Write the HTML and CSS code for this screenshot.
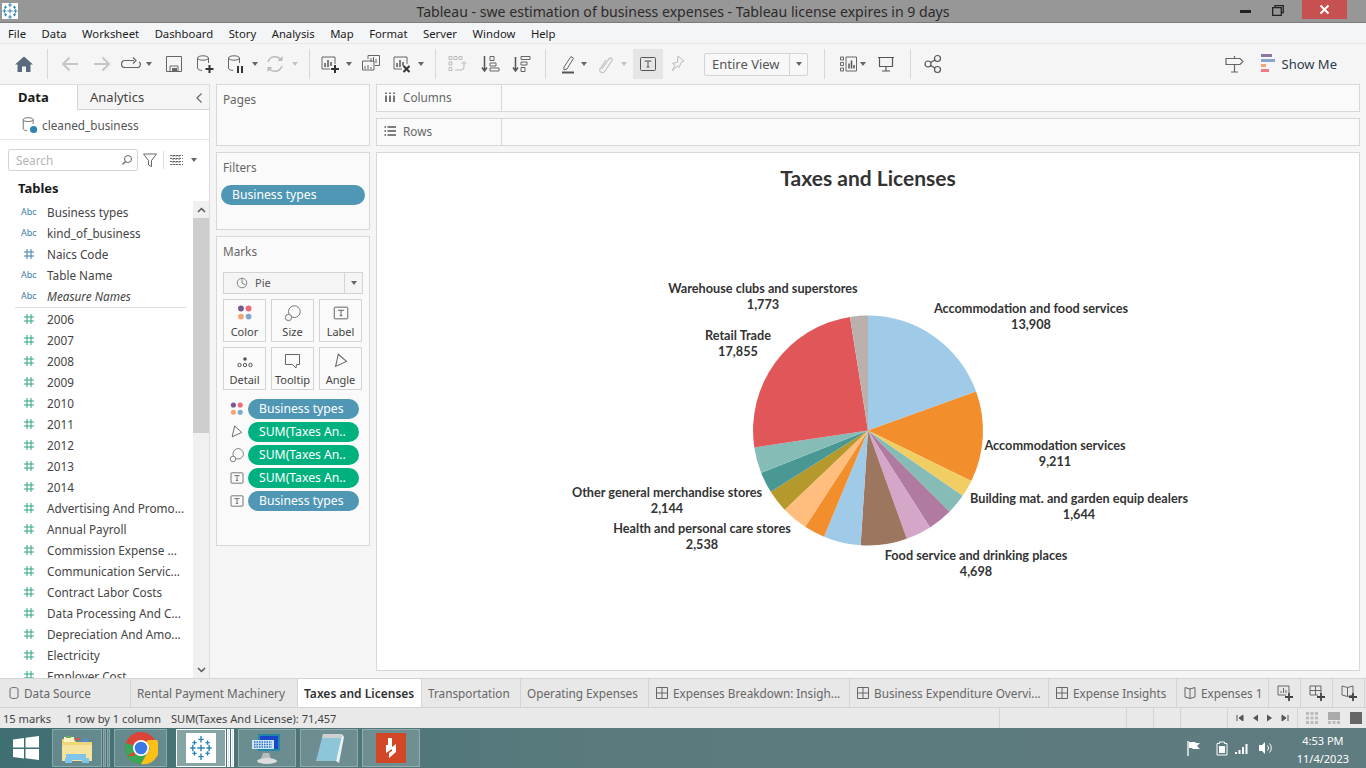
FILE: index.html
```html
<!DOCTYPE html>
<html lang="en">
<head>
  <meta charset="UTF-8" />
  <title>Tableau - swe estimation of business expenses</title>
  <link rel="stylesheet" href="styles.css">
</head>
<body>
  <svg class="defs" width="0" height="0">
    <symbol id="logo" viewBox="0 0 24 24">
      <path d="M12 1v6M9.500 4h5M12 17v6M9.500 20h5M4.500 9v6M2 12h5M19.500 9v6M17 12h5M12 9v6M8.500 12h7M6 5v4M4 7h4M18 5v4M16 7h4M6 15v4M4 17h4M18 15v4M16 17h4" fill="none" stroke="#2f84b5" stroke-width="1.300"/>
    </symbol>
    <symbol id="cyl" viewBox="0 0 20 20">
      <ellipse cx="8" cy="4" rx="5.500" ry="2.200" fill="none" stroke="#666"/>
      <path d="M2.500 4v10c0 1.500 2 2.300 4.500 2.400M13.500 4v5" fill="none" stroke="#666"/>
    </symbol>
    <symbol id="bars" viewBox="0 0 20 20">
      <path d="M10 15H2V3h13v7" fill="none" stroke="#666"/>
      <path d="M5 9v4M8 6v7M11 8v4" stroke="#555" stroke-width="1.500"/>
    </symbol>
    <symbol id="tbox" viewBox="0 0 20 20">
      <rect x="2.500" y="3.500" width="15" height="13" rx="1" fill="none" stroke="#555"/>
      <path d="M7 7.500V7h6v.5M10 7v6M8.500 13h3" fill="none" stroke="#555"/>
    </symbol>
    <symbol id="dots" viewBox="0 0 20 20">
      <circle cx="5.500" cy="5" r="3.200" fill="#76598a"/>
      <circle cx="14" cy="5" r="3.200" fill="#ef6a78"/>
      <circle cx="5.500" cy="14" r="3.200" fill="#f2a676"/>
      <circle cx="14" cy="14" r="3.200" fill="#85a7cf"/>
    </symbol>
    <symbol id="sizeic" viewBox="0 0 20 20">
      <circle cx="11.500" cy="8.500" r="6.500" fill="#fafafa" stroke="#666"/>
      <circle cx="5" cy="15" r="3.500" fill="#fafafa" stroke="#666"/>
    </symbol>
    <symbol id="angle" viewBox="0 0 20 20">
      <path d="M7 2.500l9 8-12 5.500z" fill="none" stroke="#666" stroke-width="1.200"/>
    </symbol>
    <symbol id="hash" viewBox="0 0 12 12">
      <path d="M4 1v10M8 1v10M1 4h10M1 8h10" fill="none" stroke="currentColor"/>
    </symbol>
    <symbol id="grid4" viewBox="0 0 14 14">
      <path d="M1.500 1.500h11v11h-11zM7 1.500v11M1.500 7h11" fill="none" stroke="#666"/>
    </symbol>
    <symbol id="book" viewBox="0 0 14 14">
      <path d="M7 3L2 1.500v9.500l5 1.500 5-1.500V1.500zM7 3v9.500" fill="none" stroke="#666"/>
    </symbol>
  </svg>

  <div class="titlebar">
    <div class="app-icon"><svg width="18" height="18"><use href="#logo"/></svg></div>
    <div class="title-text">Tableau - swe estimation of business expenses - Tableau license expires in 9 days</div>
    <div class="win-btns">
      <span class="win-min"></span>
      <svg class="win-max" width="12" height="11" viewBox="0 0 12 11"><path d="M3 2V.7h8.300v7H9.500M.7 2.700h8.600v7.600H.7z" fill="none" stroke="#222" stroke-width="1.300"/></svg>
      <div class="win-close"><svg width="11" height="11" viewBox="0 0 11 11"><path d="M1.500 1.500l8 8M9.500 1.500l-8 8" stroke="#fff" stroke-width="2"/></svg></div>
    </div>
  </div>

  <div class="menubar">
    <a>File</a><a>Data</a><a>Worksheet</a><a>Dashboard</a><a>Story</a><a>Analysis</a><a>Map</a><a>Format</a><a>Server</a><a>Window</a><a>Help</a>
  </div>

  <div class="toolbar">
    <svg class="tool" viewBox="0 0 20 20"><path d="M10 2.500l9 8h-2.500V18h-4.500v-5.500H8V18H3.500v-7.500H1z" fill="#5a6b7d"/></svg>
    <span class="sep m13"></span>
    <svg class="tool m12" viewBox="0 0 20 20"><path d="M18 10H3M9.500 3.500L3 10l6.500 6.500" fill="none" stroke="#c6c6c6" stroke-width="2"/></svg>
    <svg class="tool m12" viewBox="0 0 20 20"><path d="M2 10h15M10.500 3.500L17 10l-6.500 6.500" fill="none" stroke="#c6c6c6" stroke-width="2"/></svg>
    <svg class="tool m9" viewBox="0 0 20 20"><path d="M13 6.500H4a3.500 3.500 0 0 0 0 7h12a3 3 0 0 0 2-5.500M12 3.500l3 3-3 3" fill="none" stroke="#666" stroke-width="1.200"/></svg>
    <span class="drop m5"></span>
    <svg class="tool m10" viewBox="0 0 20 20"><path d="M2.500 2.500h15v15h-15z" fill="none" stroke="#666"/><path d="M6 12h8v5.500H6z" fill="none" stroke="#666"/><path d="M8 14h5v3H8z" fill="#666"/></svg>
    <svg class="tool m11" viewBox="0 0 20 20"><use href="#cyl"/><path d="M14.500 11v8M10.500 15h8" stroke="#333" stroke-width="2"/></svg>
    <svg class="tool m11" viewBox="0 0 20 20"><use href="#cyl"/><path d="M12 12v7M16 12v7" stroke="#333" stroke-width="2"/></svg>
    <span class="drop m6"></span>
    <svg class="tool m5" viewBox="0 0 20 20"><path d="M3 8a7.500 7.500 0 0 1 13-2.500M17 12a7.500 7.500 0 0 1-13 2.500" fill="none" stroke="#bbb" stroke-width="1.500"/><path d="M17.500 2v5h-5zM2.500 18v-5h5z" fill="#bbb"/></svg>
    <span class="drop faint m7"></span>
    <span class="sep m9"></span>
    <svg class="tool m10" viewBox="0 0 20 20"><use href="#bars"/><path d="M15 11v8M11 15h8" stroke="#333" stroke-width="2"/></svg>
    <span class="drop m6"></span>
    <svg class="tool m7" viewBox="0 0 20 20"><path d="M7 5V1.500h11.500v10H14" fill="none" stroke="#666"/><path d="M1.500 7h11.500v9H1.500z" fill="#f5f5f5" stroke="#666"/><path d="M10 8V4M12.500 8V3M15 9V5M4 15v-3M7 15v-4M10 15v-2" stroke="#666"/></svg>
    <svg class="tool m11" viewBox="0 0 20 20"><use href="#bars"/><path d="M11.500 12l6 6M17.500 12l-6 6" stroke="#333" stroke-width="2"/></svg>
    <span class="drop m6"></span>
    <span class="sep m9"></span>
    <svg class="tool m11" viewBox="0 0 20 20"><path d="M2 2.500h3v3H2zM7 2.500h3v3H7zM12 2.500h3v3h-3zM2 8h3v3H2zM2 13.500h3v3H2zM8 16h6a3 3 0 0 0 3-3V8M14.500 10l2.500-2.500 2.500 2.500" fill="none" stroke="#bbb"/></svg>
    <svg class="tool m13" viewBox="0 0 20 20"><path d="M4.500 2v14M2 13.500L4.500 17 7 13.500" fill="none" stroke="#555" stroke-width="1.500"/><path d="M10 2.500h4v4h-4zM10 9h6v3h-6zM10 14h9v3h-9z" fill="none" stroke="#666"/></svg>
    <svg class="tool m11" viewBox="0 0 20 20"><path d="M4.500 3v14M2 13.500L4.500 17 7 13.500" fill="none" stroke="#555" stroke-width="1.500"/><path d="M10 2.500h9v3h-9zM10 8h6v3h-6zM10 13.500h4v4h-4z" fill="none" stroke="#666"/></svg>
    <span class="sep m14"></span>
    <svg class="tool m12" viewBox="0 0 20 20"><path d="M6 13L13 2.500l2.500 1.700L9 15l-3 1z" fill="none" stroke="#666"/><path d="M4 18.500h12" stroke="#555" stroke-width="2"/></svg>
    <span class="drop m3"></span>
    <svg class="tool m6" viewBox="0 0 20 20"><path d="M7 15l7-10c1.500-2 4-.5 3 1.500L10 17c-2 3-6.500 1-5-2l6-9" fill="none" stroke="#c4c4c4" stroke-width="1.300"/></svg>
    <span class="drop faint m6"></span>
    <div class="tool-on m4"><svg width="20" height="20"><use href="#tbox"/></svg></div>
    <svg class="tool m4" viewBox="0 0 20 20"><path d="M11 2l6 5-2.500 1-2.500 5.500-1.500-1.500L5 17l3-5.500-2.500-2 5-1.500z" fill="none" stroke="#bbb"/></svg>
    <div class="fit-box m17"><span class="fit-label">Entire View</span><span class="fit-arrow"><span class="drop"></span></span></div>
    <span class="sep m16"></span>
    <svg class="tool m13" viewBox="0 0 20 20"><path d="M2.500 3h3v3h-3zM2.500 8.500h3v3h-3zM2.500 14h3v3h-3zM8 3h10.500v14H8z" fill="none" stroke="#666"/><path d="M11 9.500v5M13.500 6.500v8M16 11v3.500" stroke="#555" stroke-width="1.500"/></svg>
    <span class="drop m2"></span>
    <svg class="tool m8" viewBox="0 0 20 20"><path d="M2 3.500h16M3.500 3.500h13v9h-13zM10 12.500v4M6 17h8" fill="none" stroke="#555" stroke-width="1.200"/></svg>
    <span class="sep m14"></span>
    <svg class="tool m12" viewBox="0 0 20 20"><circle cx="5" cy="10" r="3" fill="none" stroke="#555" stroke-width="1.200"/><circle cx="14.500" cy="4.500" r="3" fill="none" stroke="#555" stroke-width="1.200"/><circle cx="14.500" cy="15.500" r="3" fill="none" stroke="#555" stroke-width="1.200"/><path d="M7.600 8.500l4.300-2.500M7.600 11.500l4.300 2.500" stroke="#555" stroke-width="1.200"/></svg>
    <svg class="tool push-right" viewBox="0 0 20 20"><path d="M2 4.500h14l3 3-3 3H2zM10.500 10.500V18M7 18h7M10.500 2v2.500" fill="none" stroke="#666" stroke-width="1.200"/></svg>
    <div class="showme m17">
      <span class="showme-icon"><i class="sm1"></i><i class="sm2"></i><i class="sm3"></i><i class="sm4"></i></span>
      <span>Show Me</span>
    </div>
  </div>

  <div class="workspace">
    <div class="sidebar">
      <div class="side-tabs">
        <div class="side-tab active">Data</div>
        <div class="side-tab">Analytics
          <svg class="collapse" width="8" height="12" viewBox="0 0 8 12"><path d="M6.500 1.500L2 6l4.500 4.500" fill="none" stroke="#666" stroke-width="1.200"/></svg>
        </div>
      </div>
      <div class="source">
        <svg width="18" height="18" viewBox="0 0 20 20"><use href="#cyl"/><circle cx="14" cy="15" r="4" fill="#2f84b5"/></svg>
        <span>cleaned_business</span>
      </div>
      <div class="search-row">
        <div class="search-box">
          <span>Search</span>
          <svg width="12" height="12" viewBox="0 0 12 12"><circle cx="7" cy="5" r="3.500" fill="none" stroke="#666"/><path d="M4.500 7.500L1.500 10.500" stroke="#666" stroke-width="1.200"/></svg>
        </div>
        <svg width="16" height="16" viewBox="0 0 16 16"><path d="M1.500 2h13L9.500 8.500v6l-3-1.500V8.500z" fill="none" stroke="#666"/></svg>
        <span class="vline"></span>
        <svg width="13" height="10" viewBox="0 0 13 10"><path d="M0 .5h13M0 3.500h13M0 6.500h13M0 9.500h13M3 0v10M6 0v10M9 0v10" fill="none" stroke="#666" stroke-dasharray="2 1"/></svg>
        <span class="drop"></span>
      </div>
      <div class="tables-head">Tables</div>
      <div class="fields-wrap">
        <div class="fields">
          <div class="field"><span class="t-abc">Abc</span>Business types</div>
          <div class="field"><span class="t-abc">Abc</span>kind_of_business</div>
          <div class="field"><svg class="t-hash dim" width="12" height="12"><use href="#hash"/></svg>Naics Code</div>
          <div class="field"><span class="t-abc">Abc</span>Table Name</div>
          <div class="field em"><span class="t-abc">Abc</span>Measure Names</div>
          <div class="field-line"></div>
          <div class="field"><svg class="t-hash" width="12" height="12"><use href="#hash"/></svg>2006</div>
          <div class="field"><svg class="t-hash" width="12" height="12"><use href="#hash"/></svg>2007</div>
          <div class="field"><svg class="t-hash" width="12" height="12"><use href="#hash"/></svg>2008</div>
          <div class="field"><svg class="t-hash" width="12" height="12"><use href="#hash"/></svg>2009</div>
          <div class="field"><svg class="t-hash" width="12" height="12"><use href="#hash"/></svg>2010</div>
          <div class="field"><svg class="t-hash" width="12" height="12"><use href="#hash"/></svg>2011</div>
          <div class="field"><svg class="t-hash" width="12" height="12"><use href="#hash"/></svg>2012</div>
          <div class="field"><svg class="t-hash" width="12" height="12"><use href="#hash"/></svg>2013</div>
          <div class="field"><svg class="t-hash" width="12" height="12"><use href="#hash"/></svg>2014</div>
          <div class="field"><svg class="t-hash" width="12" height="12"><use href="#hash"/></svg>Advertising And Promo...</div>
          <div class="field"><svg class="t-hash" width="12" height="12"><use href="#hash"/></svg>Annual Payroll</div>
          <div class="field"><svg class="t-hash" width="12" height="12"><use href="#hash"/></svg>Commission Expense ...</div>
          <div class="field"><svg class="t-hash" width="12" height="12"><use href="#hash"/></svg>Communication Servic...</div>
          <div class="field"><svg class="t-hash" width="12" height="12"><use href="#hash"/></svg>Contract Labor Costs</div>
          <div class="field"><svg class="t-hash" width="12" height="12"><use href="#hash"/></svg>Data Processing And C...</div>
          <div class="field"><svg class="t-hash" width="12" height="12"><use href="#hash"/></svg>Depreciation And Amo...</div>
          <div class="field"><svg class="t-hash" width="12" height="12"><use href="#hash"/></svg>Electricity</div>
          <div class="field"><svg class="t-hash" width="12" height="12"><use href="#hash"/></svg>Employer Cost</div>
        </div>
        <div class="scrollbar">
          <div class="sb-btn"><svg width="9" height="6" viewBox="0 0 9 6"><path d="M1 5l3.500-3.500L8 5" fill="none" stroke="#555" stroke-width="1.500"/></svg></div>
          <div class="sb-thumb"></div>
          <div class="sb-track"></div>
          <div class="sb-btn"><svg width="9" height="6" viewBox="0 0 9 6"><path d="M1 1l3.500 3.500L8 1" fill="none" stroke="#555" stroke-width="1.500"/></svg></div>
        </div>
      </div>
    </div>

    <div class="cards">
      <div class="card pages"><div class="card-head">Pages</div></div>
      <div class="card filters">
        <div class="card-head">Filters</div>
        <div class="pill blue filter-pill">Business types</div>
      </div>
      <div class="card marks">
        <div class="card-head">Marks</div>
        <div class="mark-type">
          <span class="mark-type-label">
            <svg width="12" height="12" viewBox="0 0 12 12"><circle cx="6" cy="6" r="4.800" fill="none" stroke="#888"/><path d="M6 6V1.200M6 6l3.500 2" stroke="#888"/></svg>
            Pie
          </span>
          <span class="mark-arrow"><span class="drop"></span></span>
        </div>
        <div class="mark-grid">
          <div class="mark-btn"><svg width="18" height="18"><use href="#dots"/></svg>Color</div>
          <div class="mark-btn"><svg width="18" height="18"><use href="#sizeic"/></svg>Size</div>
          <div class="mark-btn"><svg width="18" height="18"><use href="#tbox"/></svg>Label</div>
          <div class="mark-btn"><svg width="18" height="18" viewBox="0 0 18 18"><circle cx="9" cy="7" r="1.800" fill="#555"/><circle cx="3.500" cy="13" r="1.700" fill="none" stroke="#555"/><circle cx="9" cy="13" r="1.700" fill="none" stroke="#555"/><circle cx="14.500" cy="13" r="1.700" fill="none" stroke="#555"/></svg>Detail</div>
          <div class="mark-btn"><svg width="18" height="18" viewBox="0 0 18 18"><path d="M1.500 2.500h14v10h-3l-.5 3.500-3.500-3.500h-7z" fill="none" stroke="#666"/></svg>Tooltip</div>
          <div class="mark-btn"><svg width="18" height="18"><use href="#angle"/></svg>Angle</div>
        </div>
        <div class="enc-list">
          <div class="enc"><svg width="16" height="16"><use href="#dots"/></svg><div class="pill blue">Business types</div></div>
          <div class="enc"><svg width="16" height="16"><use href="#angle"/></svg><div class="pill green">SUM(Taxes An..</div></div>
          <div class="enc"><svg width="16" height="16"><use href="#sizeic"/></svg><div class="pill green">SUM(Taxes An..</div></div>
          <div class="enc"><svg width="16" height="16"><use href="#tbox"/></svg><div class="pill green">SUM(Taxes An..</div></div>
          <div class="enc"><svg width="16" height="16"><use href="#tbox"/></svg><div class="pill blue">Business types</div></div>
        </div>
      </div>
    </div>

    <div class="canvas-col">
      <div class="shelf">
        <div class="shelf-name">
          <svg width="12" height="12" viewBox="0 0 12 12"><path d="M2 1.500v1.500M6 1.500v1.500M10 1.500v1.500M2 4.500V11M6 4.500V11M10 4.500V11" stroke="#555" stroke-width="1.600"/></svg>
          Columns
        </div>
      </div>
      <div class="shelf">
        <div class="shelf-name">
          <svg width="12" height="12" viewBox="0 0 12 12"><path d="M.5 2h1.500M.5 6h1.500M.5 10h1.500M3.500 2H12M3.500 6H12M3.500 10H12" stroke="#555" stroke-width="1.600"/></svg>
          Rows
        </div>
      </div>
      <div class="view">
        <div class="view-title">Taxes and Licenses</div>
        <svg class="chart" viewBox="377 153 982 517">
          <g transform="translate(868 430.500)">
            <path fill="#a0cbe8" d="M0 0V-115A115 115 0 0 1 108.100-39.100Z"/>
            <path fill="#f28e2b" d="M0 0L108.100-39.100A115 115 0 0 1 103.300 50.600Z"/>
            <path fill="#f1ce63" d="M0 0L103.300 50.600A115 115 0 0 1 94.700 65.300Z"/>
            <path fill="#86bcb6" d="M0 0L94.700 65.300A115 115 0 0 1 81.500 81.200Z"/>
            <path fill="#b07aa1" d="M0 0L81.500 81.200A115 115 0 0 1 62 96.900Z"/>
            <path fill="#d4a6c8" d="M0 0L62 96.900A115 115 0 0 1 38.800 108.300Z"/>
            <path fill="#9d7660" d="M0 0L38.800 108.300A115 115 0 0 1 -7.400 114.800Z"/>
            <path fill="#a0cbe8" d="M0 0L-7.400 114.800A115 115 0 0 1 -44 106.200Z"/>
            <path fill="#f28e2b" d="M0 0L-44 106.200A115 115 0 0 1 -62.800 96.300Z"/>
            <path fill="#ffbe7d" d="M0 0L-62.800 96.300A115 115 0 0 1 -83.400 79.200Z"/>
            <path fill="#b6992d" d="M0 0L-83.400 79.200A115 115 0 0 1 -97.300 61.300Z"/>
            <path fill="#499894" d="M0 0L-97.300 61.300A115 115 0 0 1 -106.900 42.300Z"/>
            <path fill="#86bcb6" d="M0 0L-106.900 42.300A115 115 0 0 1 -113.700 17Z"/>
            <path fill="#e15759" d="M0 0L-113.700 17A115 115 0 0 1 -18 -113.600Z"/>
            <path fill="#bab0ac" d="M0 0L-18 -113.600A115 115 0 0 1 0 -115Z"/>
          </g>
          <g class="labels">
            <text x="763" y="293">Warehouse clubs and superstores</text><text x="763" y="309">1,773</text>
            <text x="1031" y="313">Accommodation and food services</text><text x="1031" y="329">13,908</text>
            <text x="738" y="340">Retail Trade</text><text x="738" y="356">17,855</text>
            <text x="1055" y="450">Accommodation services</text><text x="1055" y="466">9,211</text>
            <text x="667" y="497">Other general merchandise stores</text><text x="667" y="513">2,144</text>
            <text x="1079" y="503">Building mat. and garden equip dealers</text><text x="1079" y="519">1,644</text>
            <text x="702" y="533">Health and personal care stores</text><text x="702" y="549">2,538</text>
            <text x="976" y="560">Food service and drinking places</text><text x="976" y="576">4,698</text>
          </g>
        </svg>
      </div>
    </div>
  </div>

  <div class="tabbar">
    <div class="tab w-source"><svg width="12" height="14" viewBox="0 0 12 14"><path d="M2 3v8c0 2 8 2 8 0V3c0-2-8-2-8 0z" fill="none" stroke="#666"/></svg>Data Source</div>
    <div class="tab w-rental">Rental Payment Machinery</div>
    <div class="tab w-taxes active">Taxes and Licenses</div>
    <div class="tab w-trans">Transportation</div>
    <div class="tab w-oper">Operating Expenses</div>
    <div class="tab w-break"><svg width="14" height="14"><use href="#grid4"/></svg>Expenses Breakdown: Insigh...</div>
    <div class="tab w-biz"><svg width="14" height="14"><use href="#grid4"/></svg>Business Expenditure Overvi...</div>
    <div class="tab w-ins"><svg width="14" height="14"><use href="#grid4"/></svg>Expense Insights</div>
    <div class="tab w-exp"><svg width="14" height="14"><use href="#book"/></svg>Expenses 1</div>
    <div class="tab-add"><svg width="18" height="18" viewBox="0 0 18 18"><path d="M10 11H2V2h11v7" fill="none" stroke="#666"/><path d="M5 9V7M7.500 9V4M10 9V6" stroke="#666"/><path d="M13 9v8M9 13h8" stroke="#444" stroke-width="1.800"/></svg></div>
    <div class="tab-add"><svg width="18" height="18" viewBox="0 0 18 18"><path d="M10 11H2V2h11v7M7.500 2v9M2 6.500h11" fill="none" stroke="#666"/><path d="M13 9v8M9 13h8" stroke="#444" stroke-width="1.800"/></svg></div>
    <div class="tab-add"><svg width="18" height="18" viewBox="0 0 18 18"><path d="M7.500 3.500L2 2v9l5.500 1.500L13 11V2zM7.500 3.500v9" fill="none" stroke="#666"/><path d="M13 9v8M9 13h8" stroke="#444" stroke-width="1.800"/></svg></div>
  </div>

  <div class="statusbar">
    <span class="st-marks">15 marks</span>
    <span class="st-rows">1 row by 1 column</span>
    <span class="st-sum">SUM(Taxes And License): 71,457</span>
    <span class="st-cell c1"></span><span class="st-cell c2"></span><span class="st-cell c3"></span><span class="st-cell c4"></span>
    <div class="st-nav">
      <svg width="8" height="8" viewBox="0 0 8 8"><path d="M1 1v6M7 1L3 4l4 3z" fill="#555" stroke="#555"/></svg>
      <svg width="8" height="8" viewBox="0 0 8 8"><path d="M7 0.500L2 4l5 3.500z" fill="#555"/></svg>
      <svg width="8" height="8" viewBox="0 0 8 8"><path d="M1 0.500L6 4l-5 3.500z" fill="#555"/></svg>
      <svg width="8" height="8" viewBox="0 0 8 8"><path d="M7 1v6M1 1l4 3-4 3z" fill="#555" stroke="#555"/></svg>
    </div>
    <div class="st-views">
      <svg width="12" height="12" viewBox="0 0 12 12"><path d="M0 1.500h12M0 6h12M0 10.500h12" stroke="#bbb" stroke-width="3" stroke-dasharray="3 1.500"/></svg>
      <svg width="12" height="12" viewBox="0 0 12 12"><path d="M0 0h12v8H0z" fill="#aaa"/><path d="M0 10.500h12" stroke="#bbb" stroke-width="3" stroke-dasharray="3 1.500"/></svg>
      <svg width="12" height="12" viewBox="0 0 12 12"><path d="M0 0h12v12H0z" fill="#666"/></svg>
    </div>
  </div>

  <div class="taskbar">
    <svg class="start" width="28" height="26" viewBox="0 0 28 26"><path d="M1 4.500l11-1.500v9.500H1zM13.500 2.800L27 1v11.500H13.500zM1 14h11v9.500l-11-1.500zM13.500 14H27v11l-13.500-1.800z" fill="#fff"/></svg>
    <div class="task w-a">
      <svg width="34" height="34" viewBox="0 0 34 34"><path d="M2 8h12l2 3h16v19H2z" fill="#f1d679"/><path d="M4 6h10v5H4z" fill="#fff3c4"/><path d="M6 5h5v2H6z" fill="#59b35c"/><path d="M15 7h5v2h-5z" fill="#d9534f"/><path d="M22 8h6v3h-6z" fill="#4d90d6"/><path d="M2 14h30v16H2z" fill="#f6e3a0"/><path d="M6 23h20v4h3v5h-7v-3H12v3H5v-5h1z" fill="#7fc4ea"/></svg>
    </div>
    <span class="task-strip"></span><span class="task-strip last"></span>
    <div class="task w-b">
      <svg width="34" height="34" viewBox="0 0 34 34"><circle cx="17" cy="17" r="16" fill="#db4437"/><path d="M17 17L24 9H33A16 16 0 0 1 17 33z" fill="#fbc116"/><path d="M17 33L26 17l-9-3L10 25 3 25A16 16 0 0 0 17 33z" fill="#3aa757"/><path d="M17 17L3 25A16 16 0 0 1 2 12z" fill="#3aa757"/><circle cx="17" cy="17" r="8" fill="#fff"/><circle cx="17" cy="17" r="6.300" fill="#3b78e7"/></svg>
    </div>
    <div class="task w-a active-task">
      <div class="tb-logo"><svg width="26" height="26"><use href="#logo"/></svg></div>
    </div>
    <span class="task-strip bright"></span><span class="task-strip bright last"></span>
    <div class="task w-c">
      <svg width="34" height="34" viewBox="0 0 34 34"><path d="M8 3h22v17H8z" fill="#28a"/><path d="M10 5h18v13H10z" fill="#1747c8"/><path d="M13 22h6l2 6H11z" fill="#bbb"/><ellipse cx="17" cy="30" rx="10" ry="3" fill="#ddd"/><path d="M2 9h22v9H2z" fill="#cfe4f7"/><path d="M4 11h18M4 13.500h18M4 16h18" stroke="#2a6fc4" stroke-width="1.300" stroke-dasharray="1.500 1"/></svg>
    </div>
    <div class="task w-c">
      <svg width="34" height="34" viewBox="0 0 34 34"><path d="M11 3h19l-6 27H4z" fill="#8dc6d8"/><path d="M11 3h19l-1 4H10z" fill="#cfcfcf"/><path d="M24 30l6-27 2 3-5 26z" fill="#e8f2f5"/></svg>
    </div>
    <div class="task w-c">
      <div class="red-logo"><svg width="18" height="22" viewBox="0 0 18 22"><path d="M6 1h4v9l4-3v8l-7 6v-5l3-2V12l-6 4V8h2z" fill="#fff"/></svg></div>
    </div>
    <div class="tray">
      <svg width="16" height="16" viewBox="0 0 16 16"><path d="M2 1v15" stroke="#fff" stroke-width="1.300"/><path d="M3 2h6l1 1h4l-3 3 3 3h-7l-1-1H3z" fill="#fff"/></svg>
      <svg class="m14" width="12" height="16" viewBox="0 0 12 16"><path d="M3.500 2h5v1.500H11V15H1V3.500h2.500z" fill="none" stroke="#fff"/><path d="M3 6h6v7H3z" fill="#fff"/></svg>
      <svg class="m6" width="16" height="12" viewBox="0 0 16 12"><path d="M1 10h2v2H1zM4.500 8h2v4h-2zM8 5h2v7H8zM11.500 2h2v10h-2z" fill="#fff"/></svg>
      <svg class="m8" width="16" height="16" viewBox="0 0 16 16"><path d="M1 5h3l3-3v12l-3-3H1z" fill="#fff"/><path d="M9.500 5.500a3.500 3.500 0 0 1 0 5M11.500 3.500a6.500 6.500 0 0 1 0 9" fill="none" stroke="#fff"/></svg>
      <div class="clock"><div>4:53 PM</div><div>11/4/2023</div></div>
    </div>
  </div>
</body>
</html>
```

FILE: styles.css
```css
* {
  box-sizing: border-box;
}
html,
body {
  margin: 0;
  padding: 0;
  height: 768px;
  overflow: hidden;
}
body {
  display: flex;
  flex-direction: column;
  font-family: 'Noto Sans', sans-serif;
  font-size: 11.75px;
  color: #444;
  background: #f5f5f5;
}
.defs {
  position: absolute;
}
svg {
  display: block;
  flex: none;
}

/* title bar */
.titlebar {
  height: 23px;
  background: #979797;
  border-bottom: 1px solid #7c7c7c;
  display: flex;
  align-items: flex-start;
}
.app-icon {
  margin: 3px 0 0 2px;
  width: 16px;
  height: 16px;
  background: #fff;
  display: flex;
  align-items: center;
  justify-content: center;
}
.title-text {
  flex: 1;
  text-align: center;
  font-size: 14.1px;
  line-height: 23px;
  color: #2b2b2b;
  padding-left: 108px;
}
.win-btns {
  display: flex;
  align-items: flex-start;
  margin-right: 19px;
}
.win-min {
  width: 11px;
  height: 3px;
  background: #222;
  margin: 10px 0 0 0;
}
.win-max {
  margin: 5px 18px 0 21px;
}
.win-close {
  width: 45px;
  height: 19px;
  background: #c75050;
  display: flex;
  align-items: center;
  justify-content: center;
}

/* menu */
.menubar {
  height: 21px;
  background: #f4f5f7;
  border-bottom: 1px solid #e8e8e8;
  display: flex;
  align-items: center;
  padding-left: 8px;
  font-size: 11.3px;
  color: #1c1c1c;
}
.menubar a {
  margin-right: 15.5px;
}

/* toolbar */
.toolbar {
  height: 40px;
  flex: none;
  background: #f5f5f5;
  display: flex;
  align-items: center;
  padding: 0 29px 0 14px;
}
.tool {
  width: 20px;
  height: 20px;
}
.sep {
  width: 1px;
  height: 30px;
  background: #d8d8d8;
}
.drop {
  width: 6px;
  height: 4px;
  margin-right: 2px;
  border-left: 3px solid transparent;
  border-right: 3px solid transparent;
  border-top: 4px solid #666;
  display: inline-block;
  flex: none;
}
.drop.faint {
  border-top-color: #c4c4c4;
}
.m2 { margin-left: 2px; }
.m3 { margin-left: 3px; }
.m4 { margin-left: 4px; }
.m5 { margin-left: 5px; }
.m6 { margin-left: 6px; }
.m7 { margin-left: 7px; }
.m8 { margin-left: 8px; }
.m9 { margin-left: 9px; }
.m10 { margin-left: 10px; }
.m11 { margin-left: 11px; }
.m12 { margin-left: 12px; }
.m13 { margin-left: 13px; }
.m14 { margin-left: 14px; }
.m16 { margin-left: 16px; }
.m17 { margin-left: 17px; }
.push-right {
  margin-left: auto;
}
.tool-on {
  width: 30px;
  height: 30px;
  background: #e6e6e6;
  display: flex;
  align-items: center;
  justify-content: center;
}
.fit-box {
  width: 104px;
  height: 23px;
  background: #f8f8f8;
  border: 1px solid #d4d4d4;
  border-radius: 2px;
  display: flex;
  align-items: center;
  font-size: 13px;
  color: #555;
}
.fit-label {
  flex: 1;
  padding: 0 0 1px 7px;
}
.fit-arrow {
  width: 18px;
  height: 21px;
  border-left: 1px solid #d4d4d4;
  display: flex;
  align-items: center;
  justify-content: center;
}
.fit-arrow .drop,
.mark-arrow .drop {
  margin-right: 0;
}
.showme {
  display: flex;
  align-items: center;
  gap: 7px;
  font-size: 13px;
  color: #2c3a4a;
}
.showme-icon {
  display: flex;
  flex-direction: column;
  width: 14px;
}
.showme-icon i {
  display: block;
  height: 3px;
  margin-bottom: 2px;
}
.sm1 { width: 11px; background: #8a78a0; }
.sm2 { width: 14px; background: #85a7cf; }
.sm3 { width: 5px; background: #f2a676; }
.sm4 { width: 8px; background: #ef7a88; }

/* main area */
.workspace {
  height: 594px;
  flex: none;
  display: flex;
}
.sidebar {
  width: 210px;
  flex: none;
  background: #fff;
  border-right: 1px solid #dcdcdc;
  border-top: 1px solid #dcdcdc;
  display: flex;
  flex-direction: column;
  overflow: hidden;
}
.side-tabs {
  display: flex;
  height: 25px;
  flex: none;
}
.side-tab {
  flex: 1;
  position: relative;
  padding-left: 12px;
  line-height: 25px;
  font-size: 13px;
  color: #444;
  background: #f5f5f5;
  border-bottom: 1px solid #d4d4d4;
}
.side-tab.active {
  flex: none;
  width: 78px;
  padding-left: 18px;
  background: #fff;
  color: #1a1a1a;
  font-weight: 700;
  border-bottom: none;
  border-right: 1px solid #d4d4d4;
}
.collapse {
  position: absolute;
  right: 6px;
  top: 7px;
}
.source {
  height: 30px;
  flex: none;
  display: flex;
  align-items: center;
  gap: 3px;
  padding-left: 21px;
  border-bottom: 1px solid #e4e4e4;
  color: #555;
}
.search-row {
  display: flex;
  align-items: center;
  height: 21px;
  margin-top: 9px;
  padding-left: 8px;
  flex: none;
}
.search-box {
  width: 130px;
  height: 22px;
  border: 1px solid #d4d4d4;
  border-radius: 2px;
  margin-right: 4px;
  padding: 0 4px 0 7px;
  display: flex;
  align-items: center;
  justify-content: space-between;
  color: #b4b4b4;
}
.vline {
  width: 1px;
  height: 18px;
  background: #ddd;
  margin: 0 6px 0 5px;
}
.search-row .drop {
  margin-left: 8px;
}
.tables-head {
  flex: none;
  margin-top: 8px;
  height: 23px;
  line-height: 21px;
  padding-left: 18px;
  font-size: 13px;
  font-weight: 700;
  color: #1a1a1a;
}
.fields-wrap {
  flex: 1;
  min-height: 0;
  display: flex;
  overflow: hidden;
}
.fields {
  width: 193px;
  flex: none;
  overflow: hidden;
}
.field {
  height: 21px;
  display: flex;
  align-items: center;
  padding-left: 47px;
  position: relative;
  color: #444;
  white-space: nowrap;
}
.field.em {
  font-style: italic;
}
.t-abc {
  position: absolute;
  left: 21px;
  font-size: 9px;
  font-style: normal;
  color: #3d7ea6;
}
.t-hash {
  position: absolute;
  left: 23px;
  color: #2fa27e;
}
.t-hash.dim {
  color: #3d7ea6;
}
.field-line {
  height: 1px;
  margin: 1px 7px 0 15px;
  background: #dcdcdc;
}
.scrollbar {
  width: 16px;
  flex: none;
  background: #f0f0f0;
  display: flex;
  flex-direction: column;
}
.sb-btn {
  height: 17px;
  flex: none;
  display: flex;
  align-items: center;
  justify-content: center;
}
.sb-thumb {
  height: 215px;
  flex: none;
  background: #cdcdcd;
}
.sb-track {
  flex: 1;
}

/* pages, filters, marks */
.cards {
  width: 154px;
  flex: none;
  margin-left: 6px;
  display: flex;
  flex-direction: column;
  gap: 6px;
}
.card {
  background: #fafafa;
  border: 1px solid #d8d8d8;
  padding: 6px 6px 0;
}
.card-head {
  color: #666;
  line-height: 16px;
}
.pages {
  height: 62px;
}
.filters {
  height: 78px;
}
.marks {
  height: 310px;
}
.filters .pill {
  margin: 10px 0 0 -2px;
  width: 144px;
}
.pill {
  height: 20px;
  font-size: 12.2px;
  line-height: 20px;
  border-radius: 10px;
  padding-left: 11px;
  color: #fff;
  white-space: nowrap;
}
.pill.blue {
  background: #4f97b5;
}
.pill.green {
  background: #00b180;
}
.mark-type {
  margin-top: 13px;
  height: 22px;
  border: 1px solid #d4d4d4;
  background: #f5f5f5;
  display: flex;
  align-items: center;
  color: #555;
  font-size: 11px;
}
.mark-type-label {
  flex: 1;
  display: flex;
  align-items: center;
  gap: 7px;
  padding: 0 0 1px 12px;
}
.mark-arrow {
  width: 18px;
  height: 20px;
  border-left: 1px solid #d4d4d4;
  display: flex;
  align-items: center;
  justify-content: center;
}
.mark-grid {
  margin-top: 5px;
  display: grid;
  grid-template-columns: 43px 43px 43px;
  grid-auto-rows: 43px;
  gap: 5px 5px;
}
.mark-btn {
  border: 1px solid #d4d4d4;
  display: flex;
  flex-direction: column;
  align-items: center;
  padding-top: 4px;
  font-size: 11px;
  color: #444;
  line-height: 16px;
}
.mark-btn svg {
  margin-bottom: 2px;
}
.enc-list {
  margin-top: 9px;
  display: flex;
  flex-direction: column;
  gap: 3px;
}
.enc {
  display: flex;
  align-items: center;
  gap: 3px;
  padding-left: 6px;
}
.enc .pill {
  width: 111px;
}

/* shelves and view */
.canvas-col {
  flex: 1;
  min-width: 0;
  margin: 0 6px 0 6px;
  padding-bottom: 7px;
  display: flex;
  flex-direction: column;
  gap: 6px;
}
.shelf {
  height: 28px;
  flex: none;
  background: #fafafa;
  border: 1px solid #d8d8d8;
}
.shelf-name {
  width: 125px;
  height: 26px;
  border-right: 1px solid #d8d8d8;
  display: flex;
  align-items: center;
  gap: 7px;
  padding: 0 0 2px 7px;
  color: #666;
  font-size: 11.75px;
}
.view {
  flex: 1;
  min-height: 0;
  position: relative;
  background: #fff;
  border: 1px solid #d8d8d8;
}
.view-title {
  text-align: center;
  font-family: Lato, sans-serif;
  font-weight: 700;
  font-size: 21px;
  line-height: 50px;
  color: #333;
  position: relative;
}
.chart {
  position: absolute;
  left: 0;
  top: 0;
  width: 982px;
  height: 517px;
}
.labels text {
  font-family: Lato, sans-serif;
  font-weight: 700;
  font-size: 12.7px;
  text-anchor: middle;
  fill: #333;
}

/* sheet tabs */
.tabbar {
  height: 30px;
  flex: none;
  display: flex;
  background: #e8e8e8;
  border-top: 1px solid #d4d4d4;
  border-bottom: 1px solid #d4d4d4;
}
.tab {
  height: 28px;
  display: flex;
  align-items: center;
  gap: 4px;
  padding-left: 6px;
  color: #666;
  white-space: nowrap;
  border-right: 1px solid #d4d4d4;
  flex: none;
}
.tab.active {
  background: #fff;
  color: #333;
  font-size: 12px;
  font-weight: 600;
}
.w-source { width: 131px; padding-left: 8px; }
.w-rental { width: 167px; }
.w-taxes { width: 124px; }
.w-trans { width: 99px; }
.w-oper { width: 128px; }
.w-break { width: 201px; }
.w-biz { width: 199px; }
.w-ins { width: 128px; }
.w-exp { width: 92px; }
.tab-add {
  width: 32px;
  height: 28px;
  flex: none;
  border-right: 1px solid #d4d4d4;
  display: flex;
  align-items: center;
  justify-content: center;
}

/* status bar */
.statusbar {
  height: 20px;
  flex: none;
  display: flex;
  align-items: center;
  background: #e9e9e9;
  font-size: 11.1px;
  color: #444;
  position: relative;
}
.st-marks { margin-left: 3px; width: 63px; }
.st-rows { width: 105px; }
.st-cell {
  position: absolute;
  top: 0;
  bottom: 0;
  width: 1px;
  background: #d4d4d4;
}
.c1 { left: 999px; }
.c2 { left: 1126px; }
.c3 { left: 1153px; }
.c4 { left: 1180px; }
.st-nav {
  position: absolute;
  left: 1227px;
  top: 0;
  bottom: 0;
  width: 71px;
  padding: 0 8px;
  border-left: 1px solid #d4d4d4;
  border-right: 1px solid #d4d4d4;
  display: flex;
  align-items: center;
  justify-content: space-between;
}
.st-views {
  position: absolute;
  left: 1306px;
  top: 4px;
  display: flex;
  gap: 10px;
}

/* windows taskbar */
.taskbar {
  flex: 1;
  display: flex;
  align-items: center;
  padding-left: 12px;
  background: linear-gradient(90deg, #3f6f73, #5a7b7e 45%, #5f7c80);
  color: #fff;
}
.start {
  margin-right: 12px;
}
.task {
  height: 38px;
  background: rgba(255, 255, 255, 0.18);
  border: 1px solid rgba(255, 255, 255, 0.25);
  display: flex;
  align-items: center;
  justify-content: center;
  flex: none;
}
.w-a { width: 50px; }
.w-b { width: 53px; margin-right: 9px; }
.w-c { width: 58px; margin-right: 4px; }
.task-strip {
  width: 3px;
  height: 38px;
  margin-left: 1px;
  background: rgba(255, 255, 255, 0.18);
  border: 1px solid rgba(255, 255, 255, 0.25);
  flex: none;
}
.task-strip.last {
  margin-right: 4px;
}
.task-strip.bright {
  background: #dfe8e8;
  border-color: #fff;
}
.active-task {
  background: rgba(255, 255, 255, 0.35);
  border-color: #fff;
}
.tb-logo {
  width: 30px;
  height: 30px;
  background: #fff;
  display: flex;
  align-items: center;
  justify-content: center;
}
.red-logo {
  width: 30px;
  height: 30px;
  background: #d24726;
  display: flex;
  align-items: center;
  justify-content: center;
}
.tray {
  margin-left: auto;
  display: flex;
  align-items: center;
  padding-right: 17px;
}
.clock {
  margin-left: 23px;
  padding-top: 3px;
  text-align: center;
  font-size: 11px;
  line-height: 18px;
}
```
